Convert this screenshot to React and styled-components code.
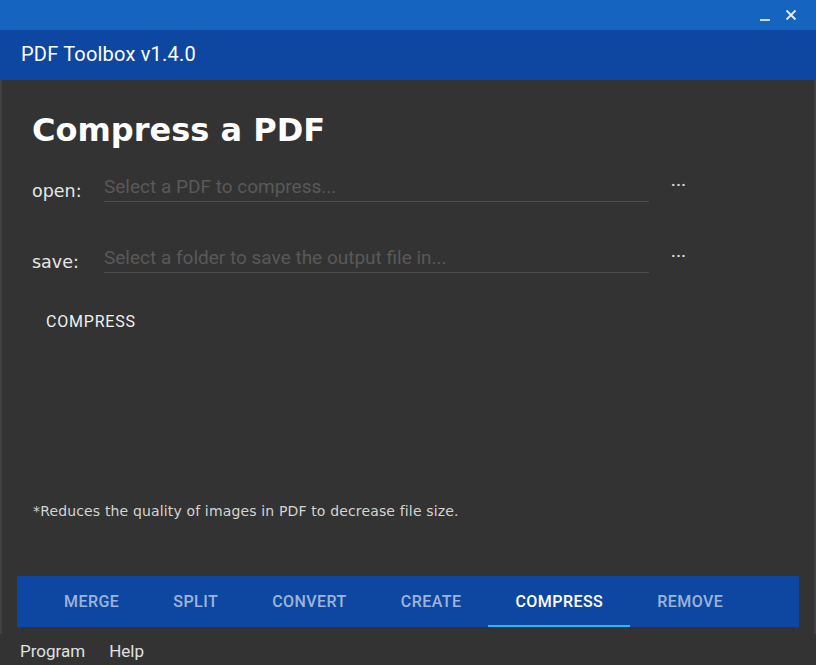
import React from "react";
import styled, { createGlobalStyle } from "styled-components";

const Global = createGlobalStyle`
  html, body { margin: 0; padding: 0; background: #333333; }
  body { width: 816px; height: 665px; overflow: hidden; }
  * { box-sizing: border-box; }
`;

const Window = styled.div`
  width: 816px;
  height: 665px;
  display: flex;
  flex-direction: column;
  background: #333333;
  font-family: Roboto, "Noto Sans", sans-serif;
`;

const TitleBar = styled.div`
  height: 30px;
  flex: none;
  background: #1565c0;
  display: flex;
  justify-content: flex-end;
  align-items: center;
  gap: 12px;
  padding-right: 18px;
`;

const WinButton = styled.div`
  width: 14px;
  height: 14px;
  display: flex;
  align-items: center;
  justify-content: center;
`;

const Header = styled.div`
  height: 50px;
  flex: none;
  background: #0d47a1;
  display: flex;
  align-items: center;
  padding-left: 21px;
  color: #ffffff;
  font-family: Roboto, sans-serif;
  font-weight: 400;
  font-size: 20px;
  letter-spacing: 0.2px;
  padding-bottom: 2px;
`;

const Main = styled.div`
  flex: 1;
  display: flex;
  flex-direction: column;
  border-left: 2px solid #414141;
  border-right: 2px solid #414141;
  padding: 0 15px 7px 15px;
`;

const Content = styled.div`
  flex: 1;
  display: flex;
  flex-direction: column;
  padding: 34px 0 57px 15px;
`;

const Title = styled.h1`
  margin: 0;
  font-family: "DejaVu Sans", Verdana, sans-serif;
  font-weight: bold;
  font-size: 32px;
  line-height: 32px;
  color: #ffffff;
`;

const FieldRow = styled.div`
  display: flex;
  align-items: flex-end;
  height: 32px;
  margin-top: ${(p) => p.$top}px;
`;

const Label = styled.span`
  width: 72px;
  flex: none;
  font-family: "DejaVu Sans", Verdana, sans-serif;
  font-size: 17.5px;
  color: #e6e6e6;
  line-height: 20px;
  padding-bottom: 1px;
`;

const Input = styled.div`
  width: 545px;
  flex: none;
  height: 30px;
  border-bottom: 1px solid #4d4d4d;
  display: flex;
  align-items: center;
  font-family: Roboto, sans-serif;
  font-size: 19px;
  color: #595959;
  padding-bottom: 0px;
`;

const Dots = styled.span`
  margin-left: 22px;
  align-self: flex-start;
  margin-top: ${(p) => p.$dy}px;
  font-family: Roboto, sans-serif;
  font-weight: bold;
  font-size: 15px;
  letter-spacing: 0.6px;
  color: #dcdcdc;
`;

const ActionButton = styled.div`
  align-self: flex-start;
  margin-top: 33px;
  padding: 6px 14px;
  font-family: Roboto, sans-serif;
  font-weight: 400;
  font-size: 16px;
  letter-spacing: 0.8px;
  color: #f0f0f0;
`;

const Footnote = styled.p`
  margin: auto 0 0 1px;
  font-family: "DejaVu Sans", Verdana, sans-serif;
  font-size: 14px;
  letter-spacing: 0.15px;
  line-height: 16px;
  color: #d4d4d4;
`;

const TabBar = styled.div`
  height: 51px;
  flex: none;
  background: #0d47a1;
  display: flex;
  align-items: stretch;
  padding-left: 20px;
`;

const Tab = styled.div`
  position: relative;
  display: flex;
  align-items: center;
  padding: 0 27px;
  font-family: Roboto, sans-serif;
  font-weight: 500;
  font-size: 16px;
  letter-spacing: 0.45px;
  color: ${(p) => (p.$active ? "#ffffff" : "rgba(255,255,255,0.6)")};

  &::after {
    content: "";
    display: ${(p) => (p.$active ? "block" : "none")};
    position: absolute;
    left: 0;
    right: 0;
    bottom: 0;
    height: 2px;
    background: #29b6f6;
  }
`;

const MenuBar = styled.div`
  height: 31px;
  flex: none;
  display: flex;
  align-items: center;
  gap: 24px;
  padding-left: 20px;
  padding-top: 3px;
  font-family: Roboto, sans-serif;
  font-size: 17px;
  color: #e0e0e0;
`;

const tabs = ["MERGE", "SPLIT", "CONVERT", "CREATE", "COMPRESS", "REMOVE"];

export default function App() {
  return (
    <>
      <Global />
      <Window>
        <TitleBar>
          <WinButton>
            <svg width="12" height="14" viewBox="0 0 12 14">
              <rect x="1" y="11" width="10" height="2" fill="#cfd8ea" />
            </svg>
          </WinButton>
          <WinButton>
            <svg width="12" height="12" viewBox="0 0 12 12">
              <path d="M1.5 1.5 L10.5 10.5 M10.5 1.5 L1.5 10.5" stroke="#e8eef8" strokeWidth="1.8" />
            </svg>
          </WinButton>
        </TitleBar>
        <Header>PDF Toolbox v1.4.0</Header>
        <Main>
          <Content>
            <Title>Compress a PDF</Title>
            <FieldRow $top={24}>
              <Label>open:</Label>
              <Input>Select a PDF to compress...</Input>
              <Dots $dy={6}>···</Dots>
            </FieldRow>
            <FieldRow $top={39}>
              <Label>save:</Label>
              <Input>Select a folder to save the output file in...</Input>
              <Dots $dy={6}>···</Dots>
            </FieldRow>
            <ActionButton>COMPRESS</ActionButton>
            <Footnote>*Reduces the quality of images in PDF to decrease file size.</Footnote>
          </Content>
          <TabBar>
            {tabs.map((t) => (
              <Tab key={t} $active={t === "COMPRESS"}>
                {t}
              </Tab>
            ))}
          </TabBar>
        </Main>
        <MenuBar>
          <span>Program</span>
          <span>Help</span>
        </MenuBar>
      </Window>
    </>
  );
}
